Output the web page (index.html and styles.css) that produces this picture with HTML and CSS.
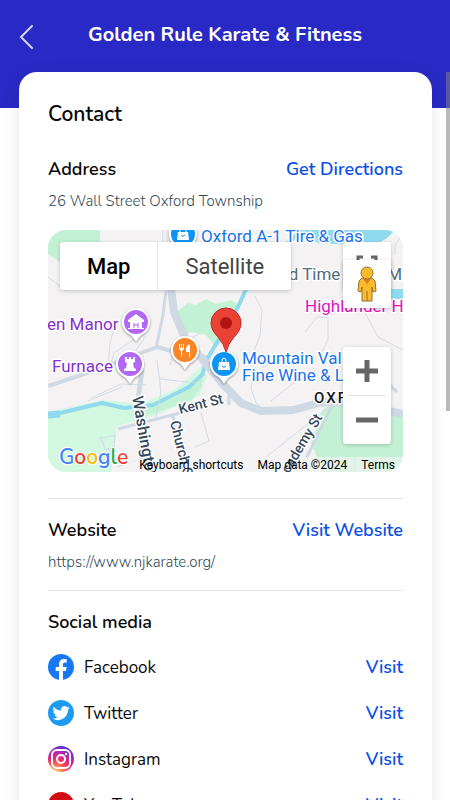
FILE: index.html
```html
<!DOCTYPE html>
<html lang="en">
<head>
    <meta charset="UTF-8">
    <meta name="viewport" content="width=device-width, initial-scale=1">
    <title>Golden Rule Karate &amp; Fitness</title>
    <link rel="stylesheet" href="styles.css">
</head>
<body>
    <div class="app">
        <header class="header">
            <button class="back-button" aria-label="Back">
                <svg width="16" height="26" viewBox="0 0 16 26"><path d="M14 2 3 13l11 11" /></svg>
            </button>
            <h1>Golden Rule Karate &amp; Fitness</h1>
        </header>

        <main class="content">
            <div class="card">
                <h2>Contact</h2>

                <section class="section">
                    <div class="row">
                        <h3>Address</h3>
                        <a href="#directions">Get Directions</a>
                    </div>
                    <p class="detail">26 Wall Street Oxford Township</p>

                    <div class="map">
                        <svg class="map-canvas" viewBox="0 0 355 242" preserveAspectRatio="xMidYMid slice">
                            <rect width="355" height="242" fill="#f4f2f3" />
                            <!-- parks -->
                            <g fill="#c3f1d5">
                                <path d="M0 0h52v14l-40 18L0 24z" />
                                <path d="M129 82l11-9 8 2 10-6 10 5 15-4 7 5-8 28-14 14-10-12-15-3-9 5z" />
                                <path d="M355 182l-55-8c-12-2-20 0-26 7l-11 33 13 28h79z" />
                            </g>
                            <path d="M0 182l55-12 37 4 36-15 28-25 3 12-8 20-45 20-37 10-6 46H0z" fill="#d3f8e2" />
                            <path d="M82 185l46-18 27-24-1 13-10 14-52 18z" fill="#c3f1d5" />
                            <!-- water -->
                            <g fill="none" stroke="#90daee" stroke-linejoin="round">
                                <path d="M0 184l12-1 42-10 22 5 29-3 36-18 13-12 5-16 14-23 17-29 10-22 12-16 40-37" stroke-width="4" />
                                <path d="M0 185l12-1" stroke-width="7" />
                                <path d="M343 64h12" stroke-width="10" />
                            </g>
                            <path d="M242 0h105l-8 8-13 8-55-3-20-7z" fill="#90daee" />
                            <!-- small roads -->
                            <g fill="none" stroke="#d2dbe4" stroke-width="1" stroke-linejoin="round">
                                <path d="M0 47l18 14M115 0l-1 30M119 0v45l12 10M88 108l-22 15-4 14M98 106l-10 14-8 18" />
                                <path d="M68 91l-6 22-2 25" />
                                <path d="M74 157l-34 14M43 168l30-14 26 1M109 130l4 32-5 25M112 149l36 4 9-8M152 103l-25 16-5 16" />
                                <path d="M50 209l17-4-1 13-9 2-4-14M60 218l10 14M69 237l23-8M153 183l8 28-14 6" />
                                <path d="M207 66l7 14-2 25-8 22M257 102l12-15h11v23l-9 17M316 81l14 26 25 13M262 0l8 12" />
                                <path d="M355 3l-8 12v10M207 138l-4 20 5 15 7 6M223 171l25-20M282 176l-64 51M226 130l-12 8" />
                            </g>
                            <!-- main roads -->
                            <g fill="none" stroke="#cfd9e3" stroke-linejoin="round">
                                <path d="M0 156l45-15 35-13 29-11 21 6 28 4" stroke-width="4" />
                                <path d="M94 140l-4 30 5 72" stroke-width="5" />
                                <path d="M118 61l-3 24-7 33M70 199l58-15 30-9" stroke-width="3" />
                                <path d="M123 58l3 24 12 28 17 20 19 23 19 20 20 8 32-1 30-8 32 1 48 11" stroke-width="8" />
                                <path d="M181 165v10M335 148l14 14M287 169l-29 60" stroke-width="3" />
                                <path d="M124 184l4 12" stroke-width="3" />
                            </g>
                            <rect x="80" y="227" width="275" height="15" fill="#f5f5f5" fill-opacity=".65" />
                            <path d="M307 227v15" stroke="#c3f1d5" />

                            <!-- labels -->
                            <g class="map-label" font-size="17">
                                <text x="153" y="12" fill="#1a73e8">Oxford A-1 Tire &amp; Gas</text>
                                <text x="231" y="50" fill="#536c7b">od Time Dairy M</text>
                                <text x="257" y="82" fill="#e30fbd">Highlander H</text>
                                <text x="-1" y="100" fill="#8430ce">en Manor</text>
                                <text x="4" y="142" fill="#8430ce">Furnace</text>
                                <text x="194" y="134" fill="#1a73e8">Mountain Valley</text>
                                <text x="194" y="151" fill="#1a73e8">Fine Wine &amp; Liq</text>
                            </g>
                            <g class="map-label road-label">
                                <text transform="translate(84 167) rotate(80)" font-size="16">Washington</text>
                                <text transform="translate(122 192) rotate(76)" font-size="14">Church St</text>
                                <text transform="translate(132 184) rotate(-14)" font-size="14">Kent St</text>
                                <text transform="translate(236 252) rotate(-59)" font-size="14">Academy St</text>
                                <text class="town-label" x="266" y="173" font-size="15">OXFORD</text>
                            </g>

                            <!-- markers -->
                            <g class="markers">
                                <circle cx="135" cy="4" r="13" fill="#0d94f5" />
                                <path d="M88 79a13 13 0 0 1 9 22q-6 4-9 9-3-5-9-9a13 13 0 0 1 9-22z" fill="#fff" />
                                <circle cx="88" cy="92" r="13" fill="#b268f5" />
                                <path d="M82 121a13 13 0 0 1 9 22q-6 4-9 9-3-5-9-9a13 13 0 0 1 9-22z" fill="#fff" />
                                <circle cx="82" cy="134" r="13" fill="#b268f5" />
                                <path d="M137 107a13 13 0 0 1 9 22q-6 4-9 9-3-5-9-9a13 13 0 0 1 9-22z" fill="#fff" />
                                <circle cx="137" cy="120" r="13" fill="#fa8526" />
                                <path d="M176 121a13 13 0 0 1 9 22q-6 4-9 9-3-5-9-9a13 13 0 0 1 9-22z" fill="#fff" />
                                <circle cx="176" cy="134" r="13" fill="#0d94f5" />
                            </g>
                            <g fill="#fff">
                                <path d="M130 2h10l1 8h-12z" />
                                <path d="M171 132h10l1 8h-12z" />
                                <path d="M80 90l8-6 8 6v2H80zM82 92h12v6H82zM80 98h16v1H80z" />
                                <path d="M77 127h2v2h2v-2h2v2h2v-2h2v5l-2 1 1 5 2 1v2H76v-2l2-1 1-5-2-1z" />
                                <path d="M131 114h1v4h1v-4h1v4h1v-4h1v5l-2 2v6h-1v-6l-2-2zM142 114v13h-1v-5h-3v-4q1-3 4-4z" />
                            </g>
                            <g fill="none" stroke="#fff">
                                <path d="M132 4v-4q0-2 3-2t3 2v4M174 133v-2q0-3 2-3t2 3v2" />
                                <path d="M133 5q2 3 4 0M174 136q2 3 4 0" stroke="#0d94f5" />
                                <path d="M86 93v5M90 93v5M86 95h4" stroke="#b268f5" />
                            </g>
                            <path d="M178 122q-2-8-8-15-7-7-7-14a15 15 0 0 1 30 0q0 7-7 14-6 7-8 15z" fill="#ea4335" stroke="#c5221f" />
                            <circle cx="178" cy="93" r="6" fill="#b31412" />

                            <text class="google" x="11" y="234"><tspan fill="#4285f4">G</tspan><tspan fill="#ea4335">o</tspan><tspan fill="#fbbc04">o</tspan><tspan fill="#4285f4">g</tspan><tspan fill="#34a853">l</tspan><tspan fill="#ea4335">e</tspan></text>
                        </svg>

                        <div class="map-types">
                            <button class="active">Map</button>
                            <button>Satellite</button>
                        </div>

                        <div class="map-controls">
                            <button class="map-control fullscreen" aria-label="Toggle fullscreen view">
                                <svg width="22" height="22" viewBox="0 0 22 22"><path d="M2 8V2h5M15 2h5v6M2 14v6h5M15 20h5v-6" fill="none" stroke="#666" stroke-width="3" /></svg>
                            </button>
                            <button class="map-control pegman" aria-label="Drag Pegman onto the map to open Street View">
                                <svg width="22" height="36" viewBox="0 0 22 36">
                                    <path d="M6 12h10l3 3 1 10-3 1-1-5v14H6V21l-1 5-3-1 1-10z" fill="#fbbc2c" stroke="#926f37" />
                                    <path d="M7 13h8l-4 5z" fill="#dd7b24" />
                                    <path d="M11 25v10" stroke="#926f37" />
                                    <circle cx="11" cy="7" r="6" fill="#fbbc2c" stroke="#926f37" />
                                </svg>
                            </button>
                            <div class="zoom">
                                <button aria-label="Zoom in">
                                    <svg width="22" height="22" viewBox="0 0 22 22"><path d="M0 11h22M11 0v22" stroke="#666" stroke-width="5" /></svg>
                                </button>
                                <button aria-label="Zoom out">
                                    <svg width="22" height="22" viewBox="0 0 22 22"><path d="M0 11h22" stroke="#666" stroke-width="5" /></svg>
                                </button>
                            </div>
                        </div>

                        <div class="map-footer">
                            <button>Keyboard shortcuts</button>
                            <span>Map data ©2024</span>
                            <a href="#terms">Terms</a>
                        </div>
                    </div>
                </section>

                <section class="section">
                    <div class="row">
                        <h3>Website</h3>
                        <a href="#website">Visit Website</a>
                    </div>
                    <p class="detail">https://www.njkarate.org/</p>
                </section>

                <section class="section">
                    <h3>Social media</h3>
                    <ul class="social">
                        <li>
                            <svg width="26" height="26" viewBox="0 0 26 26">
                                <circle cx="13" cy="13" r="13" fill="#1877f2" />
                                <path d="M11 26v-9H7.700v-4H11v-3c0-3.300 2-5 5-5l2.700.2v3.200H17c-1.600 0-2 .8-2 2V13h3.600l-.6 4h-3v9z" fill="#fff" />
                            </svg>
                            <span>Facebook</span>
                            <a href="#facebook">Visit</a>
                        </li>
                        <li>
                            <svg width="26" height="26" viewBox="0 0 26 26">
                                <circle cx="13" cy="13" r="13" fill="#1d9bf0" />
                                <path transform="translate(4.500 4.500) scale(.72)" d="M24 4.600a10 10 0 0 1-2.800.8 5 5 0 0 0 2.100-2.700 10 10 0 0 1-3.100 1.200 4.900 4.900 0 0 0-8.400 4.500A14 14 0 0 1 1.700 3.200a4.900 4.900 0 0 0 1.500 6.500 5 5 0 0 1-2.200-.6 4.900 4.900 0 0 0 3.900 4.900 5 5 0 0 1-2.200.1 4.900 4.900 0 0 0 4.600 3.400A10 10 0 0 1 0 19.500 14 14 0 0 0 21.500 7.100 10 10 0 0 0 24 4.600z" fill="#fff" />
                            </svg>
                            <span>Twitter</span>
                            <a href="#twitter">Visit</a>
                        </li>
                        <li>
                            <svg width="26" height="26" viewBox="0 0 26 26">
                                <defs>
                                    <radialGradient id="insta" cx=".3" cy="1.050" r="1.100">
                                        <stop offset="0" stop-color="#ffdd78" />
                                        <stop offset=".25" stop-color="#ff8350" />
                                        <stop offset=".5" stop-color="#ef2b67" />
                                        <stop offset=".75" stop-color="#b328b5" />
                                        <stop offset="1" stop-color="#4930de" />
                                    </radialGradient>
                                </defs>
                                <circle cx="13" cy="13" r="13" fill="url(#insta)" />
                                <g fill="none" stroke="#fff" stroke-width="2">
                                    <rect x="4" y="4" width="18" height="18" rx="5" />
                                    <circle cx="13" cy="13" r="4" />
                                </g>
                                <circle cx="18" cy="8" r="1.200" fill="#fff" />
                            </svg>
                            <span>Instagram</span>
                            <a href="#instagram">Visit</a>
                        </li>
                        <li>
                            <svg width="26" height="26" viewBox="0 0 26 26">
                                <circle cx="13" cy="13" r="13" fill="#d50b14" />
                                <rect x="5" y="8" width="16" height="11" rx="3" fill="#fff" />
                                <path d="M11 10.500v6l5-3z" fill="#d50b14" />
                            </svg>
                            <span>YouTube</span>
                            <a href="#youtube">Visit</a>
                        </li>
                    </ul>
                </section>
            </div>
        </main>
        <div class="scroll-thumb"></div>
    </div>
</body>
</html>
```

FILE: styles.css
```css
:root {
    --primary-color: #2929c5;
    --link-color: #0b50e8;
    --text-color: #080808;
    --detail-color: #2f4c5a;
    --line-color: #e5e5e5;
}

* {
    margin: 0;
    padding: 0;
    box-sizing: border-box;
}

body {
    font-family: Nunito, Lato, sans-serif;
    background: #fff;
    color: var(--text-color);
}

button {
    border: none;
    background: none;
    font: inherit;
    color: inherit;
    cursor: pointer;
}

a {
    color: var(--link-color);
    text-decoration: none;
}

svg {
    display: block;
}

.app {
    position: relative;
    height: 100vh;
    overflow: hidden;
}

/* Header */
.header {
    display: grid;
    grid-template-columns: 32px 1fr 32px;
    align-items: start;
    height: 108px;
    padding: 21px 12px;
    background: var(--primary-color);
    color: #fff;
}

.back-button {
    padding: 3px 6px;
}

.back-button path {
    fill: none;
    stroke: #d5d5fa;
    stroke-width: 2;
    stroke-linecap: round;
}

h1 {
    font-size: 20px;
    line-height: 28px;
    font-weight: 700;
    text-align: center;
}

/* Card */
.content {
    margin-top: -36px;
    padding: 0 18px 0 19px;
}

.card {
    padding: 28px 29px;
    background: #fff;
    border-radius: 18px;
    box-shadow: 0 4px 18px rgba(40, 40, 90, 0.1);
}

h2 {
    margin-bottom: 29px;
    font-size: 21px;
    line-height: 28px;
    font-weight: 600;
}

h3,
.row a,
.social a {
    font-size: 18px;
    line-height: 24px;
    font-weight: 600;
}

.row {
    display: flex;
    justify-content: space-between;
}

.detail {
    margin-top: 10px;
    font-size: 15px;
    line-height: 20px;
    font-weight: 300;
    color: var(--detail-color);
}

.section + .section {
    border-top: 1px solid var(--line-color);
    margin-top: 18px;
    padding-top: 19px;
}

/* Map */
.map {
    position: relative;
    height: 242px;
    margin: 19px 0 26px;
    border-radius: 18px;
    overflow: hidden;
    font-family: Roboto, sans-serif;
}

.map-canvas {
    width: 100%;
    height: 100%;
}

.map-label {
    paint-order: stroke;
    stroke: #fff;
    stroke-width: 3px;
    stroke-linejoin: round;
}

.road-label {
    fill: #364a5c;
    font-weight: 500;
}

.town-label {
    fill: #15191c;
    letter-spacing: 2px;
}

.markers {
    stroke: #fff;
    stroke-width: 2px;
    filter: drop-shadow(0 1px 1px rgba(0, 0, 0, 0.4));
}

.google {
    font-family: Nunito, Lato, sans-serif;
    font-size: 21px;
    font-weight: 600;
    paint-order: stroke;
    stroke: #fff;
    stroke-width: 2px;
}

.map-types {
    position: absolute;
    top: 12px;
    left: 12px;
    display: flex;
    background: #fff;
    border-radius: 3px;
    box-shadow: 0 1px 4px rgba(0, 0, 0, 0.2);
}

.map-types button {
    height: 48px;
    padding: 0 27px;
    font-size: 22px;
    color: #444;
}

.map-types .active {
    color: #000;
    font-weight: 500;
    border-right: 1px solid var(--line-color);
}

.map-controls {
    position: absolute;
    top: 12px;
    right: 12px;
    width: 48px;
}

.map-control,
.zoom {
    width: 48px;
    background: #fff;
    border-radius: 3px;
    box-shadow: 0 1px 4px rgba(0, 0, 0, 0.2);
}

.map-control {
    display: flex;
    align-items: center;
    justify-content: center;
    height: 48px;
}

.pegman {
    position: relative;
    margin-top: -30px;
}

.zoom {
    margin-top: 39px;
    padding: 0 5px;
}

.zoom button {
    display: flex;
    align-items: center;
    justify-content: center;
    width: 100%;
    height: 48px;
}

.zoom button + button {
    height: 49px;
    border-top: 1px solid var(--line-color);
}

.map-footer {
    position: absolute;
    right: 8px;
    bottom: 0;
    display: flex;
    gap: 14px;
    font-size: 12px;
    line-height: 14px;
    color: #000;
}

.map-footer a {
    color: inherit;
}

/* Social media */
.social {
    list-style: none;
    margin-top: 10px;
}

.social li {
    display: flex;
    align-items: center;
    gap: 10px;
    height: 46px;
    font-size: 17px;
}

.social a {
    margin-left: auto;
}

.scroll-thumb {
    position: absolute;
    top: 72px;
    right: 0;
    width: 4px;
    height: 339px;
    background: rgba(128, 128, 128, 0.55);
}
```
